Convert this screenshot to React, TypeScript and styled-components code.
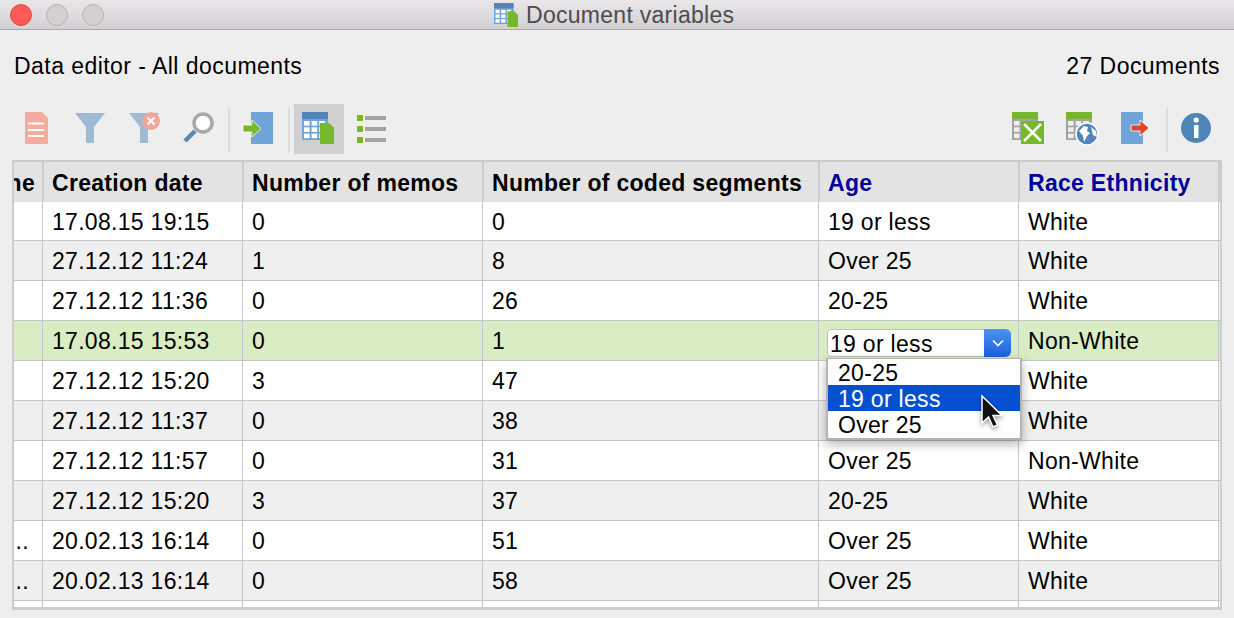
import React from 'react';
import styled, { createGlobalStyle } from 'styled-components';

const GlobalStyle = createGlobalStyle`
  html, body {
    margin: 0;
    padding: 0;
    background: #eeeeee;
    overflow: hidden;
  }
  body {
    font-family: "Liberation Sans", Arial, sans-serif;
    color: #000;
  }
`;

const Window = styled.div`
  width: 1234px;
  height: 618px;
  background: #eeeeee;
  display: flex;
  flex-direction: column;
`;

const TitleBar = styled.div`
  height: 29px;
  flex: 0 0 29px;
  border-bottom: 1px solid #a8a6a8;
  background: linear-gradient(#e9e7e9, #d3d0d3);
  display: flex;
  align-items: center;
  padding: 0 10px;
  position: relative;
`;

const Light = styled.div<{ $color: string; $edge: string }>`
  width: 20px;
  height: 20px;
  border-radius: 50%;
  margin: 0 14px 0 0;
  background: ${p => p.$color};
  border: 1px solid ${p => p.$edge};
`;

const TitleCenter = styled.div`
  position: absolute;
  left: 494px;
  top: 2px;
  display: flex;
  align-items: center;
  gap: 8px;
  font-size: 23px;
  letter-spacing: 0.28px;
  color: #4e4b4e;
  height: 26px;
`;

const InfoBar = styled.div`
  height: 72px;
  flex: 0 0 72px;
  display: flex;
  justify-content: space-between;
  align-items: center;
  padding: 0 14px;
  font-size: 23px;
  letter-spacing: 0.45px;
  box-sizing: border-box;
`;

const Toolbar = styled.div`
  height: 50px;
  flex: 0 0 50px;
  margin-top: 2px;
  display: flex;
  justify-content: space-between;
  padding: 0 13px 0 11px;
`;

const ToolGroup = styled.div`
  display: flex;
  gap: 4px;
`;

const ToolButton = styled.div<{ $active?: boolean }>`
  width: 50px;
  height: 50px;
  background: ${p => (p.$active ? '#d0d0d0' : 'transparent')};
  margin-left: ${p => (p.$active ? '1px' : '0')};
`;

const Sep = styled.div`
  width: 2px;
  height: 44px;
  margin: 4px -1px 0 1px;
  background: #dcdcdc;
`;

const Table = styled.div`
  margin: 6px 12px 0 12px;
  height: 450px;
  box-sizing: border-box;
  border: 2px solid #cccccc;
  border-bottom-width: 3px;
  background: #fff;
  overflow: hidden;
`;

const Row = styled.div<{ $bg?: string }>`
  display: grid;
  grid-template-columns: 29px 200px 240px 336px 200px 200px;
  height: 40px;
  box-sizing: border-box;
  background: ${p => p.$bg || '#fff'};
  border-bottom: 1px solid #c6c6c6;
  font-size: 23px;
  letter-spacing: 0.3px;
  &:nth-child(2) {
    height: 39px;
  }
`;

const HeaderRow = styled(Row)`
  grid-template-columns: 30px 200px 240px 336px 200px 200px;
  height: 40px;
  background: #e3e3e3;
  border-bottom: none;
  font-weight: bold;
`;

const Cell = styled.div`
  position: relative;
  box-sizing: border-box;
  display: flex;
  align-items: center;
  padding: 2px 0 0 9px;
  white-space: nowrap;
  border-right: 1px solid #c6c6c6;
`;

const HeadCell = styled(Cell)<{ $blue?: boolean }>`
  padding-left: 8px;
  border-right: 2px solid #cccccc;
  color: ${p => (p.$blue ? '#00009c' : '#000')};
`;

const ClipCell = styled(Cell)`
  padding: 2px 13px 0 0;
  justify-content: flex-end;
  overflow: hidden;
`;

const ClipHead = styled(HeadCell)`
  padding: 2px 7px 0 0;
  justify-content: flex-end;
  overflow: hidden;
`;

const SelectBox = styled.div`
  position: absolute;
  left: 8px;
  top: 8px;
  width: 184px;
  height: 28px;
  box-sizing: border-box;
  background: #fff;
  border: 1px solid #b9c4ae;
  border-radius: 4px;
  display: flex;
  justify-content: space-between;
  align-items: center;
  padding: 2px 0 0 2px;
  line-height: 26px;
`;

const SelectArrow = styled.div`
  width: 27px;
  height: 28px;
  margin: -2px -1px 0 0;
  border-radius: 0 6px 6px 0;
  background: linear-gradient(#4d92f2, #1a60dc);
  display: flex;
  align-items: center;
  justify-content: center;
`;

const Popup = styled.div`
  position: absolute;
  left: 7px;
  top: 37px;
  width: 196px;
  height: 82px;
  box-sizing: border-box;
  background: #fff;
  border: 2px solid #b4b4b4;
  border-top-width: 1px;
  box-shadow: 0 4px 10px rgba(0, 0, 0, 0.3);
  z-index: 2;
`;

const PopupItem = styled.div<{ $selected?: boolean }>`
  height: 26px;
  box-sizing: border-box;
  display: flex;
  align-items: center;
  padding: 3px 0 0 10px;
  background: ${p => (p.$selected ? '#0550d0' : 'transparent')};
  color: ${p => (p.$selected ? '#fff' : '#000')};
`;

const Cursor = styled.svg`
  position: absolute;
  left: 160px;
  top: 73px;
  z-index: 3;
  filter: drop-shadow(0 2px 2px rgba(0, 0, 0, 0.4));
`;

const BLUE = '#6fa5d8';
const DARK = '#4f86b7';
const GREEN = '#76b82a';
const GRAY = '#a3a3a3';

const TableIcon = ({ small }: { small?: boolean }) => (
  <svg
    width={small ? 24 : 50}
    height={small ? 24 : 50}
    viewBox={small ? '8 8 32 32' : '0 0 50 50'}
    style={{ display: 'block' }}
  >
    <rect x="8" y="8" width="26" height="28" fill={BLUE} />
    <rect x="8" y="8" width="26" height="7" fill={DARK} />
    {[0, 1, 2].map(r =>
      [0, 1, 2].map(c => (
        <rect key={`${r}-${c}`} x={10 + c * 7.6} y={17 + r * 6.3} width="5.6" height="4.6" fill="#fff" />
      ))
    )}
    <path d="M26 19 H35 L40 24 V40 H26 Z" fill={GREEN} />
  </svg>
);

const Icon = ({ children }: { children: React.ReactNode }) => (
  <svg width="50" height="50" viewBox="0 0 50 50" style={{ display: 'block' }}>
    {children}
  </svg>
);

const GrayTable = () => (
  <>
    <rect x="9" y="8" width="26" height="28" fill={GRAY} />
    <rect x="9" y="8" width="26" height="7" fill={GREEN} />
    {[0, 1, 2].map(r =>
      [0, 1, 2].map(c => (
        <rect key={`${r}-${c}`} x={11 + c * 7.6} y={17 + r * 6.3} width="5.6" height="4.6" fill="#eee" />
      ))
    )}
  </>
);

const rows = [
  { name: '', date: '17.08.15 19:15', memos: '0', seg: '0', age: '19 or less', race: 'White' },
  { name: '', date: '27.12.12 11:24', memos: '1', seg: '8', age: 'Over 25', race: 'White' },
  { name: '', date: '27.12.12 11:36', memos: '0', seg: '26', age: '20-25', race: 'White' },
  { name: '', date: '17.08.15 15:53', memos: '0', seg: '1', age: '', race: 'Non-White' },
  { name: '', date: '27.12.12 15:20', memos: '3', seg: '47', age: '', race: 'White' },
  { name: '', date: '27.12.12 11:37', memos: '0', seg: '38', age: '', race: 'White' },
  { name: '', date: '27.12.12 11:57', memos: '0', seg: '31', age: 'Over 25', race: 'Non-White' },
  { name: '', date: '27.12.12 15:20', memos: '3', seg: '37', age: '20-25', race: 'White' },
  { name: '..', date: '20.02.13 16:14', memos: '0', seg: '51', age: 'Over 25', race: 'White' },
  { name: '..', date: '20.02.13 16:14', memos: '0', seg: '58', age: 'Over 25', race: 'White' },
  { name: '', date: '', memos: '', seg: '', age: '', race: '' },
];

const rowBg = (i: number) => {
  if (i === 3) return '#d9ecc3';
  return i % 2 === 1 ? '#efefef' : '#ffffff';
};

const App: React.FC = () => {
  return (
    <Window>
      <GlobalStyle />
      <TitleBar>
        <Light $color="#fc5b57" $edge="#e2463f" />
        <Light $color="#d2d0d1" $edge="#b6b4b5" />
        <Light $color="#d2d0d1" $edge="#b6b4b5" />
        <TitleCenter>
          <TableIcon small />
          Document variables
        </TitleCenter>
      </TitleBar>
      <InfoBar>
        <span>Data editor - All documents</span>
        <span>27 Documents</span>
      </InfoBar>
      <Toolbar>
        <ToolGroup>
          <ToolButton>
            <Icon>
              <path d="M14 8 H31 L37 14 V40 H14 Z" fill="#f4aca0" />
              <rect x="17" y="18.5" width="16" height="2" fill="#fff" />
              <rect x="17" y="25" width="16" height="2" fill="#fff" />
              <rect x="17" y="31" width="16" height="2" fill="#fff" />
            </Icon>
          </ToolButton>
          <ToolButton>
            <Icon>
              <path d="M10 9 H40 L29 23 V39 H21 V23 Z" fill="#9fbbd4" />
            </Icon>
          </ToolButton>
          <ToolButton>
            <Icon>
              <path d="M10 9 H40 L29 23 V39 H21 V23 Z" fill="#9fbbd4" />
              <circle cx="32" cy="17" r="9" fill="#f0a79b" />
              <path d="M28.5 13.5 L35.5 20.5 M35.5 13.5 L28.5 20.5" stroke="#fff" strokeWidth="2" />
            </Icon>
          </ToolButton>
          <ToolButton>
            <Icon>
              <path d="M12 37 L22 27" stroke="#5588b5" strokeWidth="4.5" />
              <circle cx="30" cy="19" r="9" fill="#fff" stroke="#a8a8a8" strokeWidth="3.5" />
            </Icon>
          </ToolButton>
          <Sep />
          <ToolButton>
            <Icon>
              <rect x="18" y="8" width="22" height="32" fill={BLUE} />
              <path d="M10 21 H19 V16 L28 24.5 L19 33 V28 H10 Z" fill={GREEN} stroke="#fff" strokeWidth="0.8" />
            </Icon>
          </ToolButton>
          <Sep />
          <ToolButton $active>
            <TableIcon />
          </ToolButton>
          <ToolButton>
            <Icon>
              <rect x="9" y="11" width="6" height="6" fill={GREEN} />
              <rect x="9" y="22" width="6" height="6" fill={GREEN} />
              <rect x="9" y="33" width="6" height="6" fill={GREEN} />
              <rect x="17" y="12" width="21" height="4" fill={GRAY} />
              <rect x="17" y="23" width="21" height="4" fill={GRAY} />
              <rect x="17" y="34" width="21" height="4" fill={GRAY} />
            </Icon>
          </ToolButton>
        </ToolGroup>
        <ToolGroup>
          <ToolButton>
            <Icon>
              <GrayTable />
              <rect x="18" y="17" width="23" height="23" fill={GREEN} />
              <path d="M21 20 L38 37 M38 20 L21 37" stroke="#fff" strokeWidth="2.5" />
            </Icon>
          </ToolButton>
          <ToolButton>
            <Icon>
              <GrayTable />
              <circle cx="30" cy="30" r="11" fill={DARK} stroke="#fff" strokeWidth="1.5" />
              <path d="M22 27 L27 22 L31 23 L30 27 L33 29 L30 32 L27 38 L26 32 Z M34 23 L39 27 L40 33 L36 31 Z" fill="#fff" />
            </Icon>
          </ToolButton>
          <ToolButton>
            <Icon>
              <rect x="10" y="8" width="22" height="32" fill={BLUE} />
              <path d="M20 21 H29 V16 L38 24 L29 32 V27 H20 Z" fill="#e0452a" stroke="#fff" strokeWidth="0.8" />
            </Icon>
          </ToolButton>
          <Sep />
          <ToolButton>
            <Icon>
              <circle cx="25" cy="24" r="15" fill={DARK} />
              <rect x="23" y="21" width="4.5" height="13" fill="#fff" />
              <circle cx="25.2" cy="16" r="2.6" fill="#fff" />
            </Icon>
          </ToolButton>
        </ToolGroup>
      </Toolbar>
      <Table>
        <HeaderRow>
          <ClipHead>ne</ClipHead>
          <HeadCell>Creation date</HeadCell>
          <HeadCell>Number of memos</HeadCell>
          <HeadCell>Number of coded segments</HeadCell>
          <HeadCell $blue>Age</HeadCell>
          <HeadCell $blue>Race Ethnicity</HeadCell>
        </HeaderRow>
        {rows.map((r, i) => (
          <Row key={i} $bg={rowBg(i)}>
            <ClipCell>{r.name}</ClipCell>
            <Cell>{r.date}</Cell>
            <Cell>{r.memos}</Cell>
            <Cell>{r.seg}</Cell>
            <Cell>
              {r.age}
              {i === 3 && (
                <>
                  <SelectBox>
                    19 or less
                    <SelectArrow>
                      <svg width="12" height="8" viewBox="0 0 12 8">
                        <path d="M1 1.5 L6 6.5 L11 1.5" fill="none" stroke="#fff" strokeWidth="1.6" />
                      </svg>
                    </SelectArrow>
                  </SelectBox>
                  <Popup>
                    <PopupItem>20-25</PopupItem>
                    <PopupItem $selected>19 or less</PopupItem>
                    <PopupItem>Over 25</PopupItem>
                  </Popup>
                  <Cursor width="26" height="38" viewBox="0 0 26 38">
                    <path d="M3 2 V29 L9.5 23 L14 33 L18.5 31 L14 21.5 H23 Z" fill="#111" stroke="#fff" strokeWidth="1.5" />
                  </Cursor>
                </>
              )}
            </Cell>
            <Cell>{r.race}</Cell>
          </Row>
        ))}
      </Table>
    </Window>
  );
};

export default App;
